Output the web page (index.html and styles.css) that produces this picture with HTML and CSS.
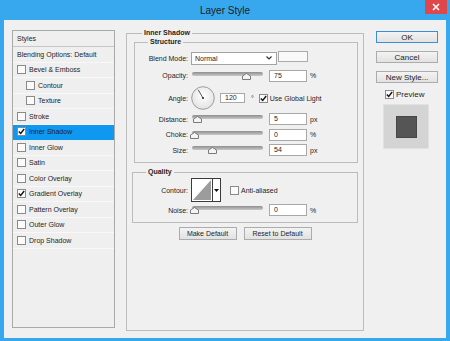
FILE: index.html
```html
<!DOCTYPE html>
<html>

<head>
    <link rel="stylesheet" href="styles.css">
</head>

<body>
    <div class="titlebar">
        <span class="title">Layer Style</span>
        <span class="close">
            <svg width="8" height="8" viewBox="0 0 8 8"><path d="M1 1L7 7M7 1L1 7" stroke="#fff" stroke-width="1.6"/></svg>
        </span>
    </div>
    <div class="content">
        <div class="list">
            <div class="list-head">Styles</div>
            <div class="row plain">Blending Options: Default</div>
            <div class="row"><span class="check"></span>Bevel &amp; Emboss</div>
            <div class="row sub"><span class="check"></span>Contour</div>
            <div class="row sub"><span class="check"></span>Texture</div>
            <div class="row"><span class="check"></span>Stroke</div>
            <div class="row active"><span class="check on"><svg width="7" height="7" viewBox="0 0 7 7"><path d="M0.8 3.4L2.7 5.4L6.2 1" stroke="#111" stroke-width="1.4" fill="none"/></svg></span>Inner Shadow</div>
            <div class="row"><span class="check"></span>Inner Glow</div>
            <div class="row"><span class="check"></span>Satin</div>
            <div class="row"><span class="check"></span>Color Overlay</div>
            <div class="row"><span class="check on"><svg width="7" height="7" viewBox="0 0 7 7"><path d="M0.8 3.4L2.7 5.4L6.2 1" stroke="#111" stroke-width="1.4" fill="none"/></svg></span>Gradient Overlay</div>
            <div class="row"><span class="check"></span>Pattern Overlay</div>
            <div class="row"><span class="check"></span>Outer Glow</div>
            <div class="row"><span class="check"></span>Drop Shadow</div>
        </div>

        <fieldset class="group main">
            <legend>Inner Shadow</legend>
            <fieldset class="group structure">
                <legend>Structure</legend>
                <div class="field blend">
                    <label>Blend Mode:</label>
                    <div class="select">Normal
                        <svg width="6" height="4" viewBox="0 0 6 4"><path d="M0.5 0.5L3 3L5.5 0.5" stroke="#333" stroke-width="1.2" fill="none"/></svg>
                    </div>
                    <div class="swatch"></div>
                </div>
                <div class="field opacity">
                    <label>Opacity:</label>
                    <div class="slider"><span class="thumb" style="left: 50px"><svg width="9" height="7" viewBox="0 0 9 7"><polygon points="0.5,6.5 0.5,3 4.5,0.5 8.5,3 8.5,6.5" fill="#f4f4f4" stroke="#7a7a7a"/></svg></span></div>
                    <div class="input">75</div>
                    <span class="unit">%</span>
                </div>
                <div class="field angle">
                    <label>Angle:</label>
                    <svg class="dial" width="24" height="24" viewBox="0 0 24 24">
                        <defs>
                            <radialGradient id="dialfill" cx="50%" cy="40%" r="60%">
                                <stop offset="0" stop-color="#ffffff"/>
                                <stop offset="1" stop-color="#e2e2e2"/>
                            </radialGradient>
                        </defs>
                        <circle cx="12" cy="12" r="11.3" fill="url(#dialfill)" stroke="#9c9c9c"/>
                        <line x1="12" y1="12" x2="7.2" y2="3.8" stroke="#444" stroke-width="0.9"/>
                        <circle cx="12" cy="12" r="1.1" fill="#333"/>
                    </svg>
                    <div class="input short">120</div>
                    <span class="deg">°</span>
                    <span class="check on"><svg width="7" height="7" viewBox="0 0 7 7"><path d="M0.8 3.4L2.7 5.4L6.2 1" stroke="#111" stroke-width="1.4" fill="none"/></svg></span>
                    <span class="check-text">Use Global Light</span>
                </div>
                <div class="field distance">
                    <label>Distance:</label>
                    <div class="slider"><span class="thumb" style="left: 1px"><svg width="9" height="7" viewBox="0 0 9 7"><polygon points="0.5,6.5 0.5,3 4.5,0.5 8.5,3 8.5,6.5" fill="#f4f4f4" stroke="#7a7a7a"/></svg></span></div>
                    <div class="input">5</div>
                    <span class="unit">px</span>
                </div>
                <div class="field choke">
                    <label>Choke:</label>
                    <div class="slider"><span class="thumb" style="left: -2px"><svg width="9" height="7" viewBox="0 0 9 7"><polygon points="0.5,6.5 0.5,3 4.5,0.5 8.5,3 8.5,6.5" fill="#f4f4f4" stroke="#7a7a7a"/></svg></span></div>
                    <div class="input">0</div>
                    <span class="unit">%</span>
                </div>
                <div class="field size">
                    <label>Size:</label>
                    <div class="slider"><span class="thumb" style="left: 16px"><svg width="9" height="7" viewBox="0 0 9 7"><polygon points="0.5,6.5 0.5,3 4.5,0.5 8.5,3 8.5,6.5" fill="#f4f4f4" stroke="#7a7a7a"/></svg></span></div>
                    <div class="input">54</div>
                    <span class="unit">px</span>
                </div>
            </fieldset>

            <fieldset class="group quality">
                <legend>Quality</legend>
                <div class="field contour-row">
                    <label>Contour:</label>
                    <div class="contour">
                        <svg class="curve" width="20" height="22" viewBox="0 0 20 22"><polygon points="1,21 19,1 19,21" fill="#9c9c9c"/></svg>
                        <div class="drop"><svg width="5" height="3" viewBox="0 0 5 3"><polygon points="0,0 5,0 2.5,3" fill="#111"/></svg></div>
                    </div>
                    <span class="check aa"></span>
                    <span class="check-text">Anti-aliased</span>
                </div>
                <div class="field noise">
                    <label>Noise:</label>
                    <div class="slider"><span class="thumb" style="left: -2px"><svg width="9" height="7" viewBox="0 0 9 7"><polygon points="0.5,6.5 0.5,3 4.5,0.5 8.5,3 8.5,6.5" fill="#f4f4f4" stroke="#7a7a7a"/></svg></span></div>
                    <div class="input">0</div>
                    <span class="unit">%</span>
                </div>
            </fieldset>

            <div class="actions">
                <div class="btn make">Make Default</div>
                <div class="btn reset">Reset to Default</div>
            </div>
        </fieldset>

        <div class="side">
            <div class="btn side-btn ok">OK</div>
            <div class="btn side-btn">Cancel</div>
            <div class="btn side-btn">New Style...</div>
            <div class="preview-check">
                <span class="check on"><svg width="7" height="7" viewBox="0 0 7 7"><path d="M0.8 3.4L2.7 5.4L6.2 1" stroke="#111" stroke-width="1.4" fill="none"/></svg></span>
                <span class="check-text">Preview</span>
            </div>
            <div class="preview">
                <div class="swatch-dark"></div>
            </div>
        </div>
    </div>
</body>

</html>
```

FILE: styles.css
```css
* {
    padding: 0;
    margin: 0;
    box-sizing: border-box;
}

body {
    width: 450px;
    height: 341px;
    overflow: hidden;
    background: #38a8ee;
    font-family: "Liberation Sans", Arial, sans-serif;
    font-size: 7px;
    color: #1e1e1e;
}

.titlebar {
    height: 20px;
    display: grid;
    grid-template-columns: 1fr auto 1fr;
}

.title {
    grid-column: 2;
    font-size: 10px;
    line-height: 22px;
    color: #1a1a1a;
}

.close {
    grid-column: 3;
    justify-self: end;
    width: 22px;
    height: 14px;
    margin-right: 3px;
    background: #e0474b;
    display: flex;
    align-items: center;
    justify-content: center;
}

.content {
    margin: 0 4px;
    height: 318px;
    background: #f0f0f0;
    display: flex;
    padding: 10px 8px;
}

/* left list */
.list {
    width: 103px;
    flex: none;
    border: 1px solid #a9a9a9;
    background: #efefef;
}

.list-head {
    height: 16px;
    border-bottom: 1px solid #c6c6c6;
    padding-left: 4px;
    display: flex;
    align-items: center;
}

.row {
    height: 15.5px;
    display: flex;
    align-items: center;
    border-bottom: 1px solid #f8f8f8;
    padding-left: 4px;
}

.row .check {
    margin-right: 3px;
}

.row.sub {
    padding-left: 13px;
}

.row.active {
    background: #0e98f0;
    border-bottom-color: #0e98f0;
}

.check {
    width: 9px;
    height: 9px;
    flex: none;
    border: 1px solid #8a8a8a;
    background: #fbfbfb;
    display: flex;
    align-items: center;
    justify-content: center;
}

.check-text {
    margin-left: 2px;
}

/* group boxes */
.group {
    border: 1px solid #bcbcbc;
    min-width: 0;
}

.group legend {
    font-weight: bold;
    line-height: 10px;
    padding: 0 2px;
}

.main {
    width: 238px;
    flex: none;
    margin: -2px 0 -3px 11px;
}

.main > legend {
    margin-left: 15px;
}

.structure {
    margin: -1px 5px 0 7px;
    padding: 4px 0 3px;
}

.structure legend,
.quality legend {
    margin-left: 13px;
}

.quality {
    margin: 4px 5px 0 5px;
    padding: 0 0 5px;
}

.field {
    display: flex;
    align-items: center;
}

.field label {
    width: 53px;
    flex: none;
    text-align: right;
}

.quality .field label {
    width: 55px;
}

.blend { height: 14px; }
.opacity { height: 21px; }
.angle { height: 24px; }
.distance { height: 18px; }
.choke { height: 13px; }
.size { height: 18px; }
.contour-row { height: 26px; }
.noise { height: 14px; }

.select {
    width: 86px;
    height: 13px;
    margin-left: 3px;
    border: 1px solid #a3a3a3;
    background: #fff;
    display: flex;
    align-items: center;
    justify-content: space-between;
    padding: 0 4px 0 3px;
}

.swatch {
    width: 30px;
    height: 11px;
    margin-left: 1px;
    align-self: flex-start;
    border: 1px solid #ababab;
    background: #f9f9f9;
}

.slider {
    position: relative;
    width: 71px;
    height: 8px;
    margin-left: 4px;
}

.slider::before {
    content: "";
    position: absolute;
    left: 0;
    right: 0;
    top: 0;
    height: 4px;
    border-radius: 2px;
    background: linear-gradient(#8e8e8e, #c8c8c8);
}

.thumb {
    position: absolute;
    top: 1px;
    width: 9px;
    height: 7px;
    display: flex;
}

.input {
    width: 38px;
    height: 12px;
    margin-left: 6px;
    border: 1px solid #a8a8a8;
    background: #fff;
    padding-left: 4px;
    line-height: 10px;
}

.input.short {
    width: 25px;
    height: 10px;
    line-height: 8px;
    margin-left: 5px;
}

.unit {
    margin-left: 3px;
}

.dial {
    margin-left: 3px;
    flex: none;
}

.deg {
    margin-left: 6px;
    margin-right: 5px;
}

.contour {
    width: 30px;
    height: 24px;
    margin-left: 3px;
    border: 1px solid #3c3c3c;
    background: #fff;
    display: flex;
}

.curve {
    flex: none;
}

.drop {
    flex: 1;
    border-left: 1px solid #3c3c3c;
    display: flex;
    align-items: center;
    justify-content: center;
}

.check.aa {
    margin-left: 9px;
}

/* buttons */
.btn {
    height: 13px;
    border: 1px solid #acacac;
    background: linear-gradient(#f3f3f3, #e2e2e2);
    display: flex;
    align-items: center;
    justify-content: center;
}

.actions {
    margin-top: 4px;
    display: flex;
    justify-content: center;
    gap: 7px;
}

.make {
    width: 58px;
}

.reset {
    width: 68px;
}

.side {
    width: 62px;
    flex: none;
    margin-left: 12px;
    display: flex;
    flex-direction: column;
    font-size: 8px;
}

.side-btn {
    height: 12px;
    margin-top: 8px;
}

.side-btn.ok {
    margin-top: 1px;
    border-color: #3d8ed6;
}

.preview-check {
    height: 14px;
    margin-top: 4px;
    padding-left: 9px;
    display: flex;
    align-items: center;
}

.preview {
    width: 46px;
    height: 45px;
    margin: 3px 0 0 7px;
    border: 1px solid #e2e2e2;
    background: #d4d4d4;
    display: flex;
    align-items: center;
    justify-content: center;
}

.swatch-dark {
    width: 21px;
    height: 22px;
    border: 1px solid #474747;
    background: #555;
}
```
